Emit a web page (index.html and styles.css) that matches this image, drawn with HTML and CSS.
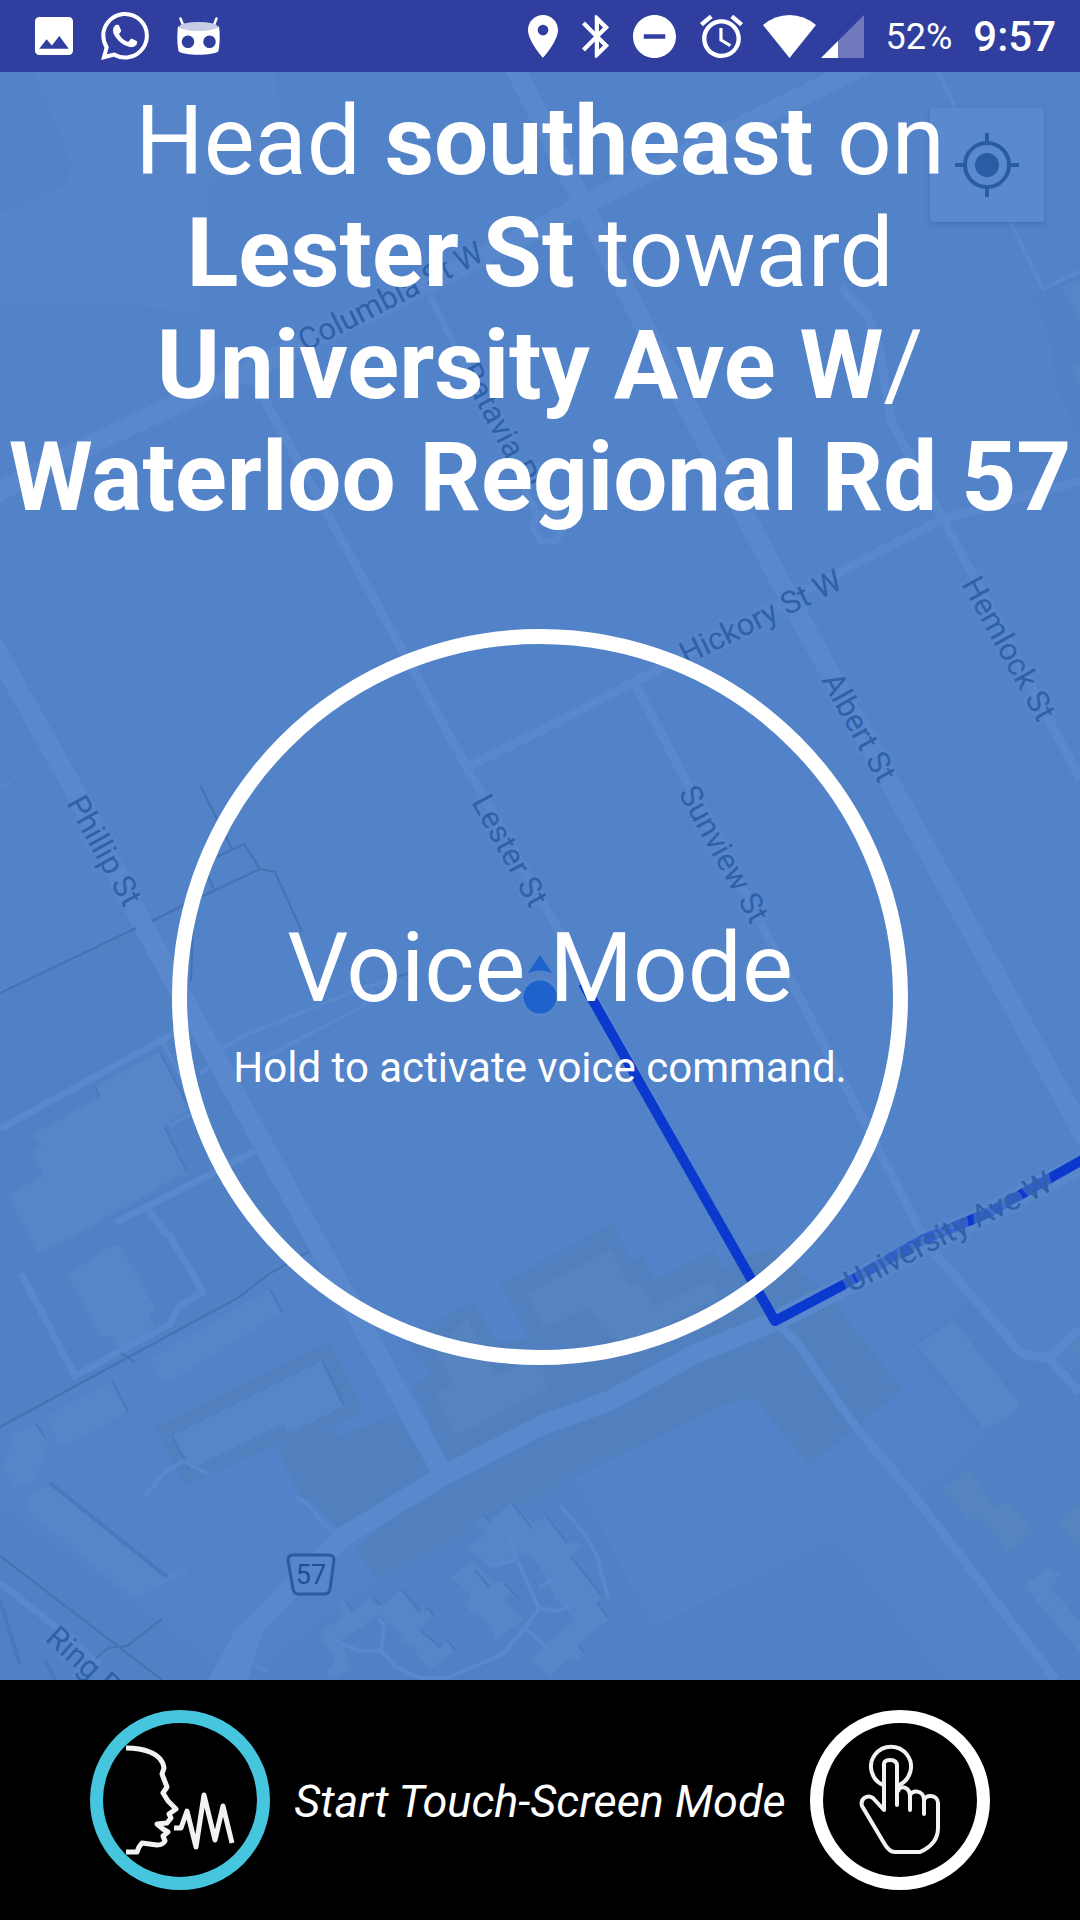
FILE: index.html
```html
<!DOCTYPE html>
<html lang="en">
<head>
<meta charset="utf-8">
<meta name="viewport" content="width=device-width, initial-scale=1">
<title>Voice Mode</title>
<link rel="stylesheet" href="styles.css">
</head>
<body>
<header class="status">
  <div class="status-group notifications">
    <svg width="38" height="38" viewBox="3 3 18 18" aria-label="Photo"><path fill="#fff" d="M21 19V5c0-1.100-.9-2-2-2H5c-1.100 0-2 .9-2 2v14c0 1.100.9 2 2 2h14c1.100 0 2-.9 2-2zM8.500 13.500l2.500 3.010L14.500 12l4.500 6H5l3.500-4.500z"/></svg>
    <svg width="48" height="48" viewBox="0 0 24 24" aria-label="WhatsApp"><path fill="#fff" d="M17.472 14.382c-.297-.149-1.758-.867-2.030-.967-.273-.099-.471-.148-.67.150-.197.297-.767.966-.94 1.164-.173.199-.347.223-.644.075-.297-.15-1.255-.463-2.390-1.475-.883-.788-1.480-1.761-1.653-2.059-.173-.297-.018-.458.130-.606.134-.133.298-.347.446-.52.149-.174.198-.298.298-.497.099-.198.050-.371-.025-.52-.075-.149-.669-1.612-.916-2.207-.242-.579-.487-.5-.669-.51-.173-.008-.371-.01-.57-.01-.198 0-.52.074-.792.372-.272.297-1.040 1.016-1.040 2.479 0 1.462 1.065 2.875 1.213 3.074.149.198 2.096 3.200 5.077 4.487.709.306 1.262.489 1.694.625.712.227 1.360.195 1.871.118.571-.085 1.758-.719 2.006-1.413.248-.694.248-1.289.173-1.413-.074-.124-.272-.198-.57-.347m-5.421 7.403h-.004a9.870 9.870 0 01-5.031-1.378l-.361-.214-3.741.982.998-3.648-.235-.374a9.860 9.860 0 01-1.510-5.260c.001-5.450 4.436-9.884 9.888-9.884 2.640 0 5.122 1.030 6.988 2.898a9.825 9.825 0 012.893 6.994c-.003 5.450-4.437 9.884-9.885 9.884m8.413-18.297A11.815 11.815 0 0012.050 0C5.495 0 .16 5.335.157 11.892c0 2.096.547 4.142 1.588 5.945L.057 24l6.305-1.654a11.882 11.882 0 005.683 1.448h.005c6.554 0 11.890-5.335 11.893-11.893a11.821 11.821 0 00-3.480-8.413z"/></svg>
    <svg width="43" height="38" viewBox="0 0 43 38" aria-label="System"><path d="M3.500 1.500 6 8M39.500 1.500 37 8" stroke="#fff" stroke-width="2.500" stroke-linecap="round"/><path fill="#fff" fill-rule="evenodd" d="M1 9c4 5.500 37 5.500 41 0 1 8 1 16-.5 25-4 5-36 5-40 0C0 25 0 17 1 9zM11 18.500a6.300 6.300 0 100 12.600 6.300 6.300 0 000-12.600zm21.500 0a6.300 6.300 0 100 12.600 6.300 6.300 0 000-12.600z"/><ellipse cx="21.500" cy="9.500" rx="19" ry="4.500" fill="#c9cce6"/></svg>
  </div>
  <div class="status-group">
    <svg width="30" height="43" viewBox="5 2 14 20" aria-label="Location"><path fill="#fff" d="M12 2C8.130 2 5 5.130 5 9c0 5.250 7 13 7 13s7-7.750 7-13c0-3.870-3.130-7-7-7zm0 9.500a2.500 2.500 0 010-5 2.500 2.500 0 010 5z"/></svg>
    <svg width="27" height="43" viewBox="5 2 12.700 20" aria-label="Bluetooth"><path fill="#fff" d="M17.710 7.710L12 2h-1v7.590L6.410 5 5 6.410 10.590 12 5 17.590 6.410 19 11 14.410V22h1l5.710-5.710-4.300-4.290 4.300-4.290zM13 5.830l1.880 1.880L13 9.590V5.830zm1.880 10.460L13 18.170v-3.760l1.880 1.880z"/></svg>
    <svg width="43" height="43" viewBox="2 2 20 20" aria-label="Do not disturb"><path fill="#fff" d="M12 2C6.480 2 2 6.480 2 12s4.480 10 10 10 10-4.480 10-10S17.520 2 12 2zm5 11H7v-2h10v2z"/></svg>
    <svg width="43" height="43" viewBox="2 2 20 20" aria-label="Alarm"><path fill="#fff" d="M22 5.720l-4.600-3.860-1.290 1.530 4.600 3.860L22 5.720zM7.880 3.390L6.600 1.860 2 5.710l1.290 1.530 4.590-3.850zM12.500 8H11v6l4.750 2.850.75-1.230-4-2.370V8zM12 4c-4.970 0-9 4.030-9 9s4.020 9 9 9a9 9 0 000-18zm0 16c-3.870 0-7-3.130-7-7s3.130-7 7-7 7 3.130 7 7-3.130 7-7 7z"/></svg>
    <span class="signals">
      <svg width="53" height="43" viewBox="0 0 53 43" aria-label="Wi-Fi"><path fill="#fff" d="M26.500 43 0 10Q12 0 26.500 0T53 10z"/></svg>
      <svg width="43" height="43" viewBox="0 0 43 43" aria-label="Signal"><path fill="#7179bc" d="M43 0v43H0z"/><path fill="#fff" d="M17 26v17H0z"/></svg>
    </span>
    <span class="readouts">
      <span class="battery">52%</span>
      <time class="clock">9:57</time>
    </span>
  </div>
</header>

<main class="screen">
  <svg class="map" viewBox="0 72 1080 1608" preserveAspectRatio="xMidYMid slice" aria-label="Map">
    <!-- land areas -->
    <g class="land-light">
      <path d="M34 72 71 164 65 185 0 214V306L80 302 201 312 208 185 285 150 275 72z"/>
    </g>
    <g class="land-dark">
      <path d="M0 993 136 928 310 1251 269 1274 238 1298 0 1427z"/>
      <path d="M573 1477 654 1627 836 1538 946 1680H240L377 1579 500 1515z"/>
      <path d="M972 1301 1022 1354 1080 1372V1680H1056L915 1496 984 1440 910 1345z"/>
      <path d="M1032 294 1080 272V439L1057 389 1050 335z"/>
      <path d="M0 1505 240 1680H0z"/>
    </g>
    <path class="building" d="M1062 287 1080 279V322zM1070 367 1080 362V385z"/>
    <g class="block">
      <path d="M155 1427 329 1341 363 1411 332 1427 339 1436 396 1414 433 1476 341 1531 322 1510 300 1495 275 1444 186 1486z"/>
      <path d="M413 1386 432 1376 406 1340 473 1300 496 1343 530 1340 501 1283 612 1224 631 1261 642 1256 655 1280 714 1251 723 1269 772 1247 833 1301 902 1390 809 1465 755 1398 747 1402 740 1398 573 1477 540 1495 377 1579 355 1549 443 1476 427 1415z"/>
    </g>
    <!-- buildings -->
    <g class="building">
      <path d="M160 1052 95 1086 100 1097 33 1134 41 1146 31 1151 44 1175 7 1195 38 1252 74 1236 188 1171 164 1126 189 1110z"/>
      <path d="M67 1275 112 1245 121 1247 155 1308 149 1317 156 1331 120 1350 112 1336 100 1336z"/>
      <path d="M150 1358 270 1289 282 1312 168 1383 158 1377z"/>
      <path d="M46 1417 112 1381 128 1412 65 1445 57 1442z"/>
      <path d="M3 1469 14 1433 38 1424 48 1447 34 1483 15 1487z"/>
      <path d="M26 1511 31 1494 50 1483 167 1577 184 1564 188 1572 134 1598z"/>
      <path d="M172 1436 322 1361 344 1406 289 1433 283 1424 190 1469z"/>
      <path d="M917 1345 953 1320 1020 1404 1010 1417 984 1429z"/>
      <path d="M1024 1586 1048 1567 1060 1574 1051 1588 1080 1622V1653z"/>
      <path d="M465 1547 486 1533 475 1524 484 1515 490 1521 511 1502 533 1524 547 1517 569 1544 578 1541 581 1546 571 1557 602 1596 597 1603 609 1619 578 1645 585 1654 577 1661 571 1656 550 1676 530 1660 575 1619 556 1600 544 1573 527 1552 505 1561 495 1570z"/>
      <path d="M451 1576 473 1561 492 1582 503 1582 510 1592 504 1600 523 1620 496 1640 484 1618 471 1612 465 1604 472 1596z"/>
      <path d="M319 1633 343 1617 338 1606 346 1600 354 1611 372 1597 383 1606 401 1589 418 1613 431 1610 430 1617 420 1630 440 1648 447 1640 455 1651 429 1670 412 1646 398 1644 405 1637 380 1615 341 1640 351 1668 333 1680 325 1672 336 1662z"/>
    </g>
    <g class="building-alt">
      <path d="M435 1394 453 1383 436 1351 467 1319 496 1374 540 1358 547 1388 460 1434 453 1430z"/>
      <path d="M527 1294 611 1249 630 1287 640 1282 653 1307 713 1279 721 1297 628 1343 611 1337 588 1308 543 1329z"/>
      <path d="M943 1489 967 1469 996 1508 1008 1500 1033 1533 1009 1552 978 1516 969 1521z"/>
      <path d="M1058 1522 1080 1504V1548zM1070 1348 1080 1340V1362z"/>
    </g>
    <g class="shadow">
      <path d="M160 1052 190 1109M164 1126 187 1172M95 1086 100 1097M270 1289 282 1312M112 1381 128 1412M322 1361 344 1406M172 1436 190 1469M36 1424 45 1437"/>
      <path d="M511 1502 532 1528M547 1517 567 1543M571 1557 602 1596M597 1603 609 1619M578 1645 585 1654M484 1515 489 1522M475 1570 490 1588M504 1583 520 1599M401 1589 420 1611M427 1607 434 1615M420 1630 440 1647M346 1602 354 1612M372 1597 380 1605M447 1640 455 1650"/>
      <path class="shadow-wide" d="M50 1483 167 1577M0 1600 20 1665M45 1660 55 1680"/>
    </g>
    <!-- roads -->
    <g class="road path">
      <path d="M1080 271 1043 289 938 72M0 787 11 783M220 1050 241 1037 355 991 398 977M240 1070 362 1007 374 990M200 1073 212 1066M162 1041 182 1078M169 1126 195 1112"/>
      <path d="M145 1496 165 1472 183 1461 208 1474M296 1497 308 1504 324 1525 339 1533M255 1667 268 1671"/>
      <path d="M510 1535 517 1560 539 1608 525 1628 503 1654 448 1678H420L396 1667 381 1651 360 1651 341 1644M381 1651 384 1624 378 1619M486 1560 491 1566 517 1560M525 1628 548 1648M560 1505 586 1536 597 1556 609 1601M539 1588 557 1577M539 1608 559 1611 574 1601"/>
    </g>
    <g class="road minor">
      <path d="M21 1273 75 1376 170 1324 179 1306 203 1292 170 1236 162 1229 148 1208M115 1223 255 1151M0 1129 180 1030M0 1583 55 1626 100 1665"/>
      <path d="M430 296 537 513 533 528 541 541H556L563 528 556 514 537 513"/>
    </g>
    <g class="road street">
      <path d="M248 370 465 764 557 928 590 990 775 1321"/>
      <path d="M465 768 540 731 636 681 836 574 943 519 1080 481"/>
      <path d="M841 287 867 314 879 346 891 421 943 519 1050 721 1080 779"/>
      <path d="M633 680 760 921 884 1160 919 1229 939 1258 1022 1354 1048 1358 1080 1329M1048 1358 1080 1392"/>
      <path d="M781 1327 795 1340 855 1426 915 1497 1056 1680"/>
    </g>
    <g class="road major">
      <path d="M-10 496 100 440 250 370 540 228 590 201 875 60"/>
      <path d="M507 52 583 203 647 331 796 611 888 779 1090 1146"/>
      <path d="M-10 639 76 793 141 921 269 1155 443 1474"/>
      <path d="M251 1629 293 1586 344 1536 443 1476 540 1426 609 1401 695 1354 778 1320 922 1247 1090 1160"/>
    </g>
    <path class="road-fill" d="M208 1680 238 1625 275 1610 262 1635 248 1680z"/>
    <!-- trails -->
    <g class="trail">
      <path d="M0 993 136 928M152 921 186 904M203 896 260 869 275 872 302 932M200 785 232 849M217 857 244 844 260 869M208 875 214 890M193 932 191 981M398 977 408 973"/>
      <path d="M0 1427 127 1358 238 1298 269 1274 310 1251M121 1353 135 1362M0 1556 119 1647 162 1680M162 1619 127 1646 108 1648 96 1658"/>
    </g>
    <path class="route" d="M583 983 775 1321 843 1285 922 1240 988 1213 1084 1159"/>
    <!-- labels -->
    <g class="road-label">
      <text transform="translate(305 352) rotate(-27)">Columbia St W</text>
      <text transform="translate(459 370) rotate(62)">Batavia Pl</text>
      <text transform="translate(686 665) rotate(-26)">Hickory St W</text>
      <text transform="translate(961 584) rotate(61)">Hemlock St</text>
      <text transform="translate(821 680) rotate(61)">Albert St</text>
      <text transform="translate(678 793) rotate(61)">Sunview St</text>
      <text transform="translate(471 802) rotate(61)">Lester St</text>
      <text transform="translate(66 803) rotate(61)">Phillip St</text>
      <text transform="translate(851 1293) rotate(-27)">University Ave W</text>
      <text transform="translate(44 1640) rotate(42)">Ring Rd</text>
    </g>
    <path class="shield" d="M293 1555H329Q334 1555 334 1560L330 1589Q329 1594 325 1594H298Q294 1594 293 1589L288 1560Q288 1555 293 1555z"/>
    <text class="shield-label" x="311" y="1584" text-anchor="middle">57</text>
    <!-- current position -->
    <path class="position" d="M540 955 552 973Q540 968 528 973z"/>
    <circle class="position-ring" cx="540" cy="997" r="18"/>
  </svg>

  <button class="locate" type="button" aria-label="My location">
    <svg width="66" height="66" viewBox="0 0 66 66"><g fill="none" stroke="#2a5ca3" stroke-width="4"><circle cx="33" cy="33" r="22"/><path d="M33 1v9M33 56v9M1 33h9M56 33h9"/></g><circle cx="33" cy="33" r="12" fill="#2a5ca3"/></svg>
  </button>

  <h1 class="instruction">Head <b>southeast</b> on <b>Lester St</b> toward <b>University Ave W</b>/<wbr><b>Waterloo Regional Rd 57</b></h1>

  <button class="voice" type="button">
    <span class="voice-title">Voice Mode</span>
    <span class="voice-hint">Hold to activate voice command.</span>
  </button>
</main>

<footer class="modes">
  <button class="mode mode-active" type="button" aria-label="Voice mode" aria-pressed="true">
    <svg viewBox="0 0 180 180"><g fill="none" stroke="#f2f2f2" stroke-width="5" stroke-linejoin="round"><path d="M36 38C51 38 72 42 74 58L72 64 77 77 73 83 78 91 86 99 79 104 81 108 77 113 67 114 73 119 78 122 73 126 75 131Q73 135 67 135L52 133 49 137 47 142H36"/><path d="M84 118H91L97 101 106 137 114 85 125 130 133 96 142 133"/></g></svg>
  </button>
  <span class="mode-label" id="mode-label">Start Touch-Screen Mode</span>
  <button class="mode" type="button" aria-labelledby="mode-label">
    <svg viewBox="0 0 180 180"><g fill="none" stroke="#f2f2f2" stroke-width="4" stroke-linejoin="round" stroke-linecap="round"><path d="M73 75A20 20 0 1 1 89 75"/><path d="M87 95V56Q87 50 80 50T74 56V100L63 88C57 84 50 89 52 96L74 133Q79 142 85 142H110Q128 134 128 118V93C128 84 114 84 114 91V104M100 100V86C101 79 114 80 114 90M88 81C90 75 100 76 100 87"/></g></svg>
  </button>
</footer>
</body>
</html>
```
FILE: styles.css
```css
* {
  box-sizing: border-box;
}

body {
  margin: 0;
  min-height: 100vh;
  display: flex;
  flex-direction: column;
  background: #000;
  color: #fff;
  font-family: Roboto, "Liberation Sans", sans-serif;
}

button {
  padding: 0;
  border: 0;
  background: none;
  color: inherit;
  font: inherit;
  cursor: pointer;
}

svg {
  display: block;
  flex: none;
}

/* Status bar */
.status {
  display: flex;
  align-items: center;
  justify-content: space-between;
  height: 72px;
  padding: 0 24px 0 35px;
  background: #303f9f;
}

.status-group {
  display: flex;
  align-items: center;
  gap: 24px;
}

.notifications {
  gap: 28px;
}

.signals {
  display: flex;
  gap: 5px;
  margin: 0 -3px 0 -4px;
}

.readouts {
  display: flex;
  align-items: center;
  gap: 21px;
  padding-top: 2px;
}

.battery {
  font-size: 36px;
  line-height: 42px;
}

.clock {
  font-size: 42px;
  line-height: 48px;
  font-weight: 500;
}

/* Map screen */
.screen {
  position: relative;
  flex: 1;
  display: flex;
  flex-direction: column;
  align-items: center;
  padding-top: 13px;
  padding-bottom: 315px;
  overflow: hidden;
  background: #5282c7;
}

.map {
  position: absolute;
  inset: 0;
  width: 100%;
  height: 100%;
}

.land-light {
  fill: #5584c8;
}

.land-dark {
  fill: #5081c4;
}

.block {
  fill: #527fbd;
}

.building {
  fill: #5686c8;
}

.building-alt {
  fill: #5684c1;
}

.shadow {
  fill: none;
  stroke: #4a78bd;
  stroke-width: 2;
}

.shadow-wide {
  stroke-width: 4;
}

.road {
  fill: none;
  stroke: #5988cd;
  stroke-linejoin: round;
}

.road-fill {
  fill: #5988cd;
}

.path {
  stroke-width: 4;
}

.minor {
  stroke-width: 7;
}

.street {
  stroke-width: 9;
}

.major {
  stroke-width: 20;
}

.trail {
  fill: none;
  stroke: #4473b0;
  stroke-width: 2;
}

.route {
  fill: none;
  stroke: #0b39ce;
  stroke-width: 10;
  stroke-linejoin: round;
}

.road-label {
  font-size: 31px;
  fill: #2f61a8;
  stroke: #5786cb;
  stroke-opacity: 0.5;
  stroke-width: 8px;
  stroke-linejoin: round;
  paint-order: stroke;
}

.shield {
  fill: #5786cb;
  stroke: #2a5ca3;
  stroke-width: 3;
}

.shield-label {
  font-size: 27px;
  fill: #1f4f97;
}

.position {
  fill: #1e63cb;
}

.position-ring {
  fill: #1e63cb;
  stroke: #5585cb;
  stroke-width: 3;
}

.locate {
  position: absolute;
  top: 36px;
  right: 36px;
  width: 114px;
  height: 114px;
  display: grid;
  place-items: center;
  border-radius: 4px;
  background: rgb(90 137 206 / 90%);
  box-shadow: 0 2px 5px rgb(40 90 165 / 40%);
}

.instruction {
  position: relative;
  margin: 0 0 96px;
  font-size: 96px;
  line-height: 112px;
  font-weight: 400;
  text-align: center;
}

.instruction b {
  font-weight: 700;
}

.voice {
  position: relative;
  width: 736px;
  max-width: 100%;
  aspect-ratio: 1;
  display: flex;
  flex-direction: column;
  align-items: center;
  justify-content: center;
  gap: 20px;
  padding-top: 10px;
  border: 15px solid #fff;
  border-radius: 50%;
}

.voice-title {
  font-size: 96px;
  line-height: 112px;
}

.voice-hint {
  font-size: 42px;
  line-height: 48px;
}

/* Mode switcher */
.modes {
  display: flex;
  align-items: center;
  justify-content: space-between;
  height: 240px;
  padding: 0 90px;
  background: #000;
}

.mode {
  width: 180px;
  height: 180px;
  border: 13px solid #fff;
  border-radius: 50%;
}

.mode svg {
  width: 180px;
  height: 180px;
  margin: -13px;
}

.mode-active {
  border-color: #46c5df;
}

.mode-label {
  padding-top: 4px;
  font-size: 45px;
  line-height: 54px;
  font-style: italic;
}
```
